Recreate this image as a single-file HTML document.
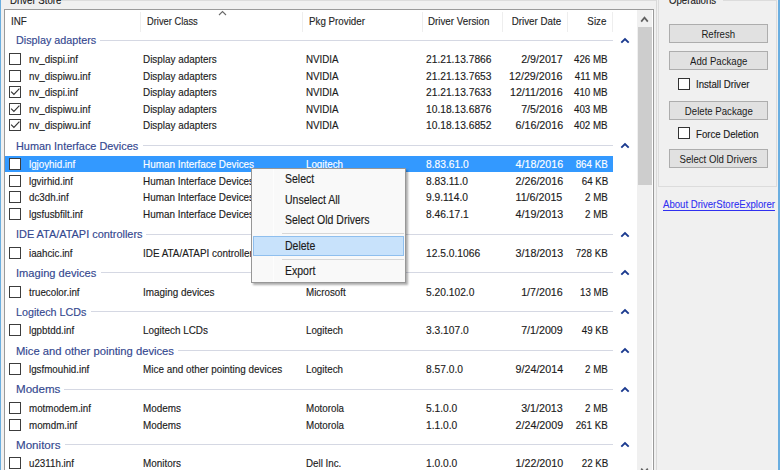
<!DOCTYPE html>
<html><head><meta charset="utf-8">
<style>
html,body{margin:0;padding:0;}
body{width:780px;height:470px;overflow:hidden;position:relative;background:#f0f0f0;font-family:"Liberation Sans",sans-serif;}
.t{position:absolute;white-space:nowrap;line-height:20px;height:20px;transform-origin:0 50%;-webkit-text-stroke:0.15px currentColor;}
.t.r{transform-origin:100% 50%;}
.it{font-size:11.5px;color:#1b1b1b;transform:scaleX(0.85);}
.gh{font-size:11px;color:#34488f;transform:scaleX(0.975);}
.hd{font-size:11.5px;color:#262626;transform:scaleX(0.85);}
.mi{font-size:12px;color:#1b1b1b;transform:scaleX(0.875);}
.bt{font-size:11px;color:#1b1b1b;transform:scaleX(0.875);}
.gt{font-size:11px;color:#1b1b1b;transform:scaleX(0.875);}
.lk{font-size:11px;color:#3030f0;transform:scaleX(0.872);text-decoration:underline;text-underline-offset:1.5px;-webkit-text-stroke:0.1px currentColor;}
#lv{position:absolute;left:4px;top:9px;width:650px;height:470px;background:#fff;border:1px solid #9a9a9a;box-sizing:border-box;overflow:hidden;}
.gline{position:absolute;height:1px;background:#d5d8e3;}
.chev{position:absolute;left:620px;width:10px;height:7px;line-height:0;}
.sel{position:absolute;left:5px;width:608px;height:16px;background:#3399ff;}
.cb{position:absolute;left:9px;width:12px;height:12px;border:1px solid #3c3c3c;box-sizing:border-box;background:#fff;line-height:0;}
.cb svg{position:absolute;left:0;top:0;}
.cb2{position:absolute;width:12px;height:12px;border:1px solid #333;box-sizing:border-box;background:#fff;}
.hdiv{position:absolute;top:12px;width:1px;height:20px;background:#eeeeee;}
#menu{position:absolute;left:251px;top:168px;width:155px;height:115px;background:#f9f9f9;border:1px solid #979797;box-sizing:border-box;box-shadow:2px 2px 2px rgba(0,0,0,0.32);}
.mgut{position:absolute;left:21px;top:0;width:1px;height:113px;background:#fdfdfd;}
.msep{position:absolute;left:30px;right:1px;height:1px;background:#d7d7d7;}
.mhl{position:absolute;left:1px;right:1px;height:20px;background:#c8e2fb;border:1px solid #8fbfee;box-sizing:border-box;}
.btn{position:absolute;left:669px;width:99px;background:#e1e1e1;border:1px solid #adadad;box-sizing:border-box;text-align:center;font-size:11px;color:#1b1b1b;}
.btn span{display:inline-block;transform:scaleX(0.875);white-space:nowrap;}
</style></head><body>
<div style="position:absolute;left:0;top:0;width:1px;height:470px;background:#6aaee0"></div>
<div style="position:absolute;left:778px;top:0;width:2px;height:470px;background:#6aaee0"></div>
<div style="position:absolute;left:62px;top:0;width:594px;height:1px;background:#dcdcdc"></div>
<div style="position:absolute;left:723px;top:0;width:54px;height:1px;background:#dcdcdc"></div>
<div style="position:absolute;left:656px;top:0;width:1px;height:470px;background:#d9d9d9"></div>
<div style="position:absolute;left:658px;top:0;width:1px;height:187px;background:#dcdcdc"></div>
<div style="position:absolute;left:776px;top:0;width:1px;height:187px;background:#dcdcdc"></div>
<div style="position:absolute;left:658px;top:186px;width:119px;height:1px;background:#dcdcdc"></div>
<div id="lv"></div>
<div class="t gh" style="left:16.00px;top:30.30px;transform:scaleX(0.9796);">Display adapters</div>
<div class="gline" style="left:100.00px;width:513.00px;top:39.80px;"></div>
<div class="chev" style="top:36.80px;"><svg width="10" height="7" viewBox="0 0 10 7"><path d="M1.3 5.6 L5 2 L8.7 5.6" fill="none" stroke="#1b3a8f" stroke-width="1.9"/></svg></div>
<div class="cb" style="top:53.00px;"></div>
<div class="t it" style="left:28.70px;top:49.00px;">nv_dispi.inf</div>
<div class="t it" style="left:143.40px;top:49.00px;transform:scaleX(0.86);">Display adapters</div>
<div class="t it" style="left:306.20px;top:49.00px;">NVIDIA</div>
<div class="t it" style="left:426.20px;top:49.00px;transform:scaleX(0.89);">21.21.13.7866</div>
<div class="t r it" style="right:217.30px;top:49.00px;transform:scaleX(0.93);">2/9/2017</div>
<div class="t r it" style="right:172.10px;top:49.00px;">426 MB</div>
<div class="cb" style="top:69.60px;"></div>
<div class="t it" style="left:28.70px;top:65.60px;">nv_dispiwu.inf</div>
<div class="t it" style="left:143.40px;top:65.60px;transform:scaleX(0.86);">Display adapters</div>
<div class="t it" style="left:306.20px;top:65.60px;">NVIDIA</div>
<div class="t it" style="left:426.20px;top:65.60px;transform:scaleX(0.89);">21.21.13.7653</div>
<div class="t r it" style="right:217.30px;top:65.60px;transform:scaleX(0.93);">12/29/2016</div>
<div class="t r it" style="right:172.10px;top:65.60px;">411 MB</div>
<div class="cb" style="top:86.20px;"><svg width="10" height="10" viewBox="0 0 10 10"><path d="M1.1 4.6 L3.9 7.4 L9.4 1.7" fill="none" stroke="#333" stroke-width="1.15"/></svg></div>
<div class="t it" style="left:28.70px;top:82.20px;">nv_dispi.inf</div>
<div class="t it" style="left:143.40px;top:82.20px;transform:scaleX(0.86);">Display adapters</div>
<div class="t it" style="left:306.20px;top:82.20px;">NVIDIA</div>
<div class="t it" style="left:426.20px;top:82.20px;transform:scaleX(0.89);">21.21.13.7633</div>
<div class="t r it" style="right:217.30px;top:82.20px;transform:scaleX(0.93);">12/11/2016</div>
<div class="t r it" style="right:172.10px;top:82.20px;">410 MB</div>
<div class="cb" style="top:102.80px;"><svg width="10" height="10" viewBox="0 0 10 10"><path d="M1.1 4.6 L3.9 7.4 L9.4 1.7" fill="none" stroke="#333" stroke-width="1.15"/></svg></div>
<div class="t it" style="left:28.70px;top:98.80px;">nv_dispiwu.inf</div>
<div class="t it" style="left:143.40px;top:98.80px;transform:scaleX(0.86);">Display adapters</div>
<div class="t it" style="left:306.20px;top:98.80px;">NVIDIA</div>
<div class="t it" style="left:426.20px;top:98.80px;transform:scaleX(0.89);">10.18.13.6876</div>
<div class="t r it" style="right:217.30px;top:98.80px;transform:scaleX(0.93);">7/5/2016</div>
<div class="t r it" style="right:172.10px;top:98.80px;">403 MB</div>
<div class="cb" style="top:119.40px;"><svg width="10" height="10" viewBox="0 0 10 10"><path d="M1.1 4.6 L3.9 7.4 L9.4 1.7" fill="none" stroke="#333" stroke-width="1.15"/></svg></div>
<div class="t it" style="left:28.70px;top:115.40px;">nv_dispiwu.inf</div>
<div class="t it" style="left:143.40px;top:115.40px;transform:scaleX(0.86);">Display adapters</div>
<div class="t it" style="left:306.20px;top:115.40px;">NVIDIA</div>
<div class="t it" style="left:426.20px;top:115.40px;transform:scaleX(0.89);">10.18.13.6852</div>
<div class="t r it" style="right:217.30px;top:115.40px;transform:scaleX(0.93);">6/16/2016</div>
<div class="t r it" style="right:172.10px;top:115.40px;">402 MB</div>
<div class="t gh" style="left:16.00px;top:135.50px;transform:scaleX(0.9888);">Human Interface Devices</div>
<div class="gline" style="left:142.70px;width:470.30px;top:145.00px;"></div>
<div class="chev" style="top:142.00px;"><svg width="10" height="7" viewBox="0 0 10 7"><path d="M1.3 5.6 L5 2 L8.7 5.6" fill="none" stroke="#1b3a8f" stroke-width="1.9"/></svg></div>
<div class="sel" style="top:156.30px;"></div>
<div class="cb" style="top:158.20px;"></div>
<div class="t it" style="left:28.70px;top:154.20px;color:#fff;">lgjoyhid.inf</div>
<div class="t it" style="left:143.40px;top:154.20px;color:#fff;transform:scaleX(0.86);">Human Interface Devices</div>
<div class="t it" style="left:306.20px;top:154.20px;color:#fff;">Logitech</div>
<div class="t it" style="left:426.20px;top:154.20px;color:#fff;transform:scaleX(0.89);">8.83.61.0</div>
<div class="t r it" style="right:217.30px;top:154.20px;color:#fff;transform:scaleX(0.93);">4/18/2016</div>
<div class="t r it" style="right:172.10px;top:154.20px;color:#fff;">864 KB</div>
<div class="cb" style="top:174.80px;"></div>
<div class="t it" style="left:28.70px;top:170.80px;">lgvirhid.inf</div>
<div class="t it" style="left:143.40px;top:170.80px;transform:scaleX(0.86);">Human Interface Devices</div>
<div class="t it" style="left:306.20px;top:170.80px;">Logitech</div>
<div class="t it" style="left:426.20px;top:170.80px;transform:scaleX(0.89);">8.83.11.0</div>
<div class="t r it" style="right:217.30px;top:170.80px;transform:scaleX(0.93);">2/26/2016</div>
<div class="t r it" style="right:172.10px;top:170.80px;">64 KB</div>
<div class="cb" style="top:191.40px;"></div>
<div class="t it" style="left:28.70px;top:187.40px;">dc3dh.inf</div>
<div class="t it" style="left:143.40px;top:187.40px;transform:scaleX(0.86);">Human Interface Devices</div>
<div class="t it" style="left:306.20px;top:187.40px;">Logitech</div>
<div class="t it" style="left:426.20px;top:187.40px;transform:scaleX(0.89);">9.9.114.0</div>
<div class="t r it" style="right:217.30px;top:187.40px;transform:scaleX(0.93);">11/6/2015</div>
<div class="t r it" style="right:172.10px;top:187.40px;">2 MB</div>
<div class="cb" style="top:208.00px;"></div>
<div class="t it" style="left:28.70px;top:204.00px;">lgsfusbfilt.inf</div>
<div class="t it" style="left:143.40px;top:204.00px;transform:scaleX(0.86);">Human Interface Devices</div>
<div class="t it" style="left:306.20px;top:204.00px;">Logitech</div>
<div class="t it" style="left:426.20px;top:204.00px;transform:scaleX(0.89);">8.46.17.1</div>
<div class="t r it" style="right:217.30px;top:204.00px;transform:scaleX(0.93);">4/19/2013</div>
<div class="t r it" style="right:172.10px;top:204.00px;">2 MB</div>
<div class="t gh" style="left:16.00px;top:224.10px;transform:scaleX(0.9919);">IDE ATA/ATAPI controllers</div>
<div class="gline" style="left:146.00px;width:467.00px;top:233.60px;"></div>
<div class="chev" style="top:230.60px;"><svg width="10" height="7" viewBox="0 0 10 7"><path d="M1.3 5.6 L5 2 L8.7 5.6" fill="none" stroke="#1b3a8f" stroke-width="1.9"/></svg></div>
<div class="cb" style="top:246.80px;"></div>
<div class="t it" style="left:28.70px;top:242.80px;">iaahcic.inf</div>
<div class="t it" style="left:143.40px;top:242.80px;transform:scaleX(0.86);">IDE ATA/ATAPI controllers</div>
<div class="t it" style="left:306.20px;top:242.80px;">Intel</div>
<div class="t it" style="left:426.20px;top:242.80px;transform:scaleX(0.89);">12.5.0.1066</div>
<div class="t r it" style="right:217.30px;top:242.80px;transform:scaleX(0.93);">3/18/2013</div>
<div class="t r it" style="right:172.10px;top:242.80px;">728 KB</div>
<div class="t gh" style="left:16.00px;top:262.90px;transform:scaleX(1.0089);">Imaging devices</div>
<div class="gline" style="left:100.50px;width:512.50px;top:272.40px;"></div>
<div class="chev" style="top:269.40px;"><svg width="10" height="7" viewBox="0 0 10 7"><path d="M1.3 5.6 L5 2 L8.7 5.6" fill="none" stroke="#1b3a8f" stroke-width="1.9"/></svg></div>
<div class="cb" style="top:285.60px;"></div>
<div class="t it" style="left:28.70px;top:281.60px;">truecolor.inf</div>
<div class="t it" style="left:143.40px;top:281.60px;transform:scaleX(0.86);">Imaging devices</div>
<div class="t it" style="left:306.20px;top:281.60px;">Microsoft</div>
<div class="t it" style="left:426.20px;top:281.60px;transform:scaleX(0.89);">5.20.102.0</div>
<div class="t r it" style="right:217.30px;top:281.60px;transform:scaleX(0.93);">1/7/2016</div>
<div class="t r it" style="right:172.10px;top:281.60px;">13 MB</div>
<div class="t gh" style="left:16.00px;top:301.70px;transform:scaleX(0.9747);">Logitech LCDs</div>
<div class="gline" style="left:90.80px;width:522.20px;top:311.20px;"></div>
<div class="chev" style="top:308.20px;"><svg width="10" height="7" viewBox="0 0 10 7"><path d="M1.3 5.6 L5 2 L8.7 5.6" fill="none" stroke="#1b3a8f" stroke-width="1.9"/></svg></div>
<div class="cb" style="top:324.40px;"></div>
<div class="t it" style="left:28.70px;top:320.40px;">lgpbtdd.inf</div>
<div class="t it" style="left:143.40px;top:320.40px;transform:scaleX(0.86);">Logitech LCDs</div>
<div class="t it" style="left:306.20px;top:320.40px;">Logitech</div>
<div class="t it" style="left:426.20px;top:320.40px;transform:scaleX(0.89);">3.3.107.0</div>
<div class="t r it" style="right:217.30px;top:320.40px;transform:scaleX(0.93);">7/1/2009</div>
<div class="t r it" style="right:172.10px;top:320.40px;">49 KB</div>
<div class="t gh" style="left:16.00px;top:340.50px;transform:scaleX(1.0211);">Mice and other pointing devices</div>
<div class="gline" style="left:178.00px;width:435.00px;top:350.00px;"></div>
<div class="chev" style="top:347.00px;"><svg width="10" height="7" viewBox="0 0 10 7"><path d="M1.3 5.6 L5 2 L8.7 5.6" fill="none" stroke="#1b3a8f" stroke-width="1.9"/></svg></div>
<div class="cb" style="top:363.20px;"></div>
<div class="t it" style="left:28.70px;top:359.20px;">lgsfmouhid.inf</div>
<div class="t it" style="left:143.40px;top:359.20px;transform:scaleX(0.86);">Mice and other pointing devices</div>
<div class="t it" style="left:306.20px;top:359.20px;">Logitech</div>
<div class="t it" style="left:426.20px;top:359.20px;transform:scaleX(0.89);">8.57.0.0</div>
<div class="t r it" style="right:217.30px;top:359.20px;transform:scaleX(0.93);">9/24/2014</div>
<div class="t r it" style="right:172.10px;top:359.20px;">2 MB</div>
<div class="t gh" style="left:16.00px;top:379.30px;transform:scaleX(1.0523);">Modems</div>
<div class="gline" style="left:64.10px;width:548.90px;top:388.80px;"></div>
<div class="chev" style="top:385.80px;"><svg width="10" height="7" viewBox="0 0 10 7"><path d="M1.3 5.6 L5 2 L8.7 5.6" fill="none" stroke="#1b3a8f" stroke-width="1.9"/></svg></div>
<div class="cb" style="top:402.00px;"></div>
<div class="t it" style="left:28.70px;top:398.00px;">motmodem.inf</div>
<div class="t it" style="left:143.40px;top:398.00px;transform:scaleX(0.86);">Modems</div>
<div class="t it" style="left:306.20px;top:398.00px;">Motorola</div>
<div class="t it" style="left:426.20px;top:398.00px;transform:scaleX(0.89);">5.1.0.0</div>
<div class="t r it" style="right:217.30px;top:398.00px;transform:scaleX(0.93);">3/1/2013</div>
<div class="t r it" style="right:172.10px;top:398.00px;">2 MB</div>
<div class="cb" style="top:418.60px;"></div>
<div class="t it" style="left:28.70px;top:414.60px;">momdm.inf</div>
<div class="t it" style="left:143.40px;top:414.60px;transform:scaleX(0.86);">Modems</div>
<div class="t it" style="left:306.20px;top:414.60px;">Motorola</div>
<div class="t it" style="left:426.20px;top:414.60px;transform:scaleX(0.89);">1.1.0.0</div>
<div class="t r it" style="right:217.30px;top:414.60px;transform:scaleX(0.93);">2/24/2009</div>
<div class="t r it" style="right:172.10px;top:414.60px;">261 KB</div>
<div class="t gh" style="left:16.00px;top:434.70px;transform:scaleX(1.0547);">Monitors</div>
<div class="gline" style="left:64.90px;width:548.10px;top:444.20px;"></div>
<div class="chev" style="top:441.20px;"><svg width="10" height="7" viewBox="0 0 10 7"><path d="M1.3 5.6 L5 2 L8.7 5.6" fill="none" stroke="#1b3a8f" stroke-width="1.9"/></svg></div>
<div class="cb" style="top:457.40px;"></div>
<div class="t it" style="left:28.70px;top:453.40px;">u2311h.inf</div>
<div class="t it" style="left:143.40px;top:453.40px;transform:scaleX(0.86);">Monitors</div>
<div class="t it" style="left:306.20px;top:453.40px;">Dell Inc.</div>
<div class="t it" style="left:426.20px;top:453.40px;transform:scaleX(0.89);">1.0.0.0</div>
<div class="t r it" style="right:217.30px;top:453.40px;transform:scaleX(0.93);">1/22/2010</div>
<div class="t r it" style="right:172.10px;top:453.40px;">22 KB</div>
<div class="t hd" style="left:11.30px;top:10.60px;">INF</div>
<div class="t hd" style="left:146.50px;top:10.60px;transform:scaleX(0.81);">Driver Class</div>
<div class="t hd" style="left:308.70px;top:10.60px;">Pkg Provider</div>
<div class="t hd" style="left:428.20px;top:10.60px;">Driver Version</div>
<div class="t r hd" style="right:218.60px;top:10.60px;">Driver Date</div>
<div class="t r hd" style="right:174.00px;top:10.60px;">Size</div>
<div class="hdiv" style="left:140px"></div>
<div class="hdiv" style="left:302px"></div>
<div class="hdiv" style="left:422px"></div>
<div class="hdiv" style="left:502px"></div>
<div class="hdiv" style="left:567px"></div>
<div class="hdiv" style="left:612px"></div>
<div style="position:absolute;left:218px;top:10px;line-height:0"><svg width="9" height="6" viewBox="0 0 9 6"><path d="M1 5 L4.5 1.5 L8 5" fill="none" stroke="#6a6a6a" stroke-width="1.1"/></svg></div>
<div style="position:absolute;left:637px;top:10px;width:15px;height:460px;background:#f0f0f0"></div>
<div style="position:absolute;left:638px;top:27px;width:14px;height:158px;background:#cdcdcd"></div>
<div style="position:absolute;left:638px;top:14px;line-height:0"><svg width="14" height="10" viewBox="0 0 14 10"><path d="M3.2 7.6 L6.5 3.6 L9.8 7.6" fill="none" stroke="#606060" stroke-width="1.7"/></svg></div>
<div style="position:absolute;left:638px;top:466px;line-height:0"><svg width="14" height="10" viewBox="0 0 14 10"><path d="M3.2 2.6 L6.5 6.4 L9.8 2.6" fill="none" stroke="#606060" stroke-width="1.7"/></svg></div>
<div id="menu">
<div class="mgut"></div>
<div class="mhl" style="top:67.40px"></div>
<div class="msep" style="top:64.00px"></div>
<div class="msep" style="top:90.00px"></div>
</div>
<div class="t mi" style="left:285.20px;top:169.40px;">Select</div>
<div class="t mi" style="left:285.20px;top:189.50px;">Unselect All</div>
<div class="t mi" style="left:285.20px;top:209.60px;">Select Old Drivers</div>
<div class="t mi" style="left:285.20px;top:235.50px;">Delete</div>
<div class="t mi" style="left:285.20px;top:261.00px;">Export</div>
<div class="btn" style="top:24px;height:19px;line-height:19px"><span>Refresh</span></div>
<div class="btn" style="top:51px;height:19px;line-height:19px"><span>Add Package</span></div>
<div class="btn" style="top:101px;height:19px;line-height:19px"><span>Delete Package</span></div>
<div class="btn" style="top:149px;height:19px;line-height:19px"><span>Select Old Drivers</span></div>
<div class="cb2" style="left:678px;top:78px"></div>
<div class="cb2" style="left:678px;top:127px"></div>
<div class="t bt" style="left:696.30px;top:74.00px;">Install Driver</div>
<div class="t bt" style="left:696.30px;top:123.60px;">Force Deletion</div>
<div class="t lk" style="left:663.00px;top:193.90px;">About DriverStoreExplorer</div>
<div class="t gt" style="left:10.00px;top:-9.80px;">Driver Store</div>
<div class="t gt" style="left:669.40px;top:-9.80px;">Operations</div>
</body></html>
